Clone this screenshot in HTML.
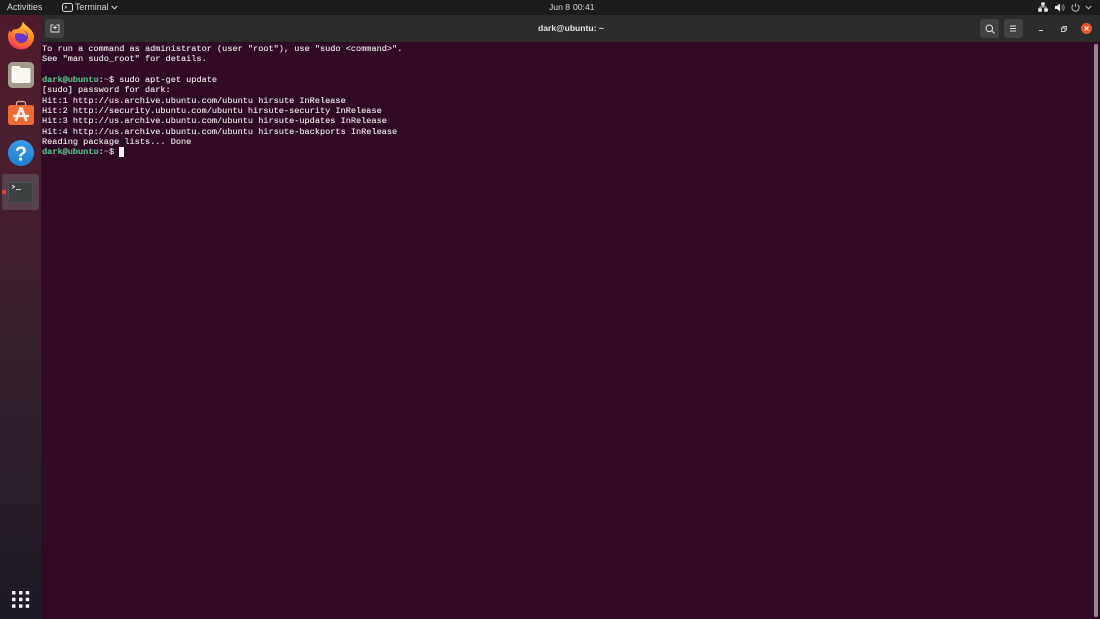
<!DOCTYPE html>
<html><head><meta charset="utf-8"><style>
*{margin:0;padding:0;box-sizing:border-box}
html,body{width:1100px;height:619px;overflow:hidden;background:#300a24}
body{position:relative;font-family:"Liberation Sans",sans-serif}
.a{position:absolute}
#top{left:0;top:0;width:1100px;height:15px;background:#1c1c1c;color:#d6d6d6;font-size:8.9px;line-height:15px}
#top span{filter:blur(.2px)}
#dock{left:0;top:15px;width:41px;height:604px;background:linear-gradient(180deg,#4f1b2c 0%,#491e2e 25%,#33202d 60%,#1d1a25 100%)}
#head{left:41px;top:15px;width:1059px;height:27px;background:#2c2c2c}
#term{left:41px;top:42px;width:1059px;height:577px;background:#300a24}
.l{position:absolute;left:42px;font:8.58px/10px "Liberation Mono",monospace;color:#ece8ea;white-space:pre;filter:blur(.25px);-webkit-text-stroke:.12px #ece8ea}
.g{color:#1fb568;font-weight:bold}.b{color:#5f7fb0}
.btn{position:absolute;width:19px;height:19px;background:#414141;border-radius:3px;top:19px}
.ic{filter:blur(.35px)}
</style></head><body>
<div class="a" id="top">
<span class="a" style="left:7px;top:0;letter-spacing:.03px">Activities</span>
<svg class="a" style="left:62px;top:3px" width="11" height="9" viewBox="0 0 11 9"><rect x=".5" y=".5" width="10" height="8" rx="2" fill="none" stroke="#d8d8d8"/><path d="M3 3l1.500 1.200L3 5.400" stroke="#d8d8d8" fill="none" stroke-width=".8"/></svg>
<span class="a" style="left:75px;top:0">Terminal</span>
<svg class="a" style="left:111px;top:5px" width="7" height="5" viewBox="0 0 7 5"><path d="M.7 1l2.800 2.800L6.300 1" stroke="#d8d8d8" fill="none"/></svg>
<span class="a" style="left:549px;top:0;font-size:8.6px">Jun 8</span>
<span class="a" style="left:573px;top:0;font-size:8.6px">00:41</span>
<svg class="a" style="left:1038px;top:2px" width="10" height="10" viewBox="0 0 10 10" fill="#ececec"><rect x="3.300" y="0.300" width="3.400" height="3.400"/><rect x="0.200" y="6.300" width="3.600" height="3.400"/><rect x="6.200" y="6.300" width="3.600" height="3.400"/><path d="M5 3v2M2 6.500V5h6v1.500" stroke="#ececec" fill="none" stroke-width=".8"/></svg>
<svg class="a" style="left:1055px;top:3px" width="10" height="9" viewBox="0 0 10 9"><path d="M0 3h2l3-2.500v8L2 6H0z" fill="#ececec"/><path d="M6.500 2.500a3 3 0 010 4M8 1.300a5 5 0 010 6.400" stroke="#999" fill="none" stroke-width=".9"/></svg>
<svg class="a" style="left:1071px;top:3px" width="9" height="9" viewBox="0 0 9 9"><path d="M4.500.5v3.500M2.300 1.800a3.600 3.600 0 104.400 0" stroke="#c4c4c4" fill="none" stroke-width=".9"/></svg>
<svg class="a" style="left:1085px;top:5px" width="7" height="5" viewBox="0 0 7 5"><path d="M.7 1l2.800 2.800L6.300 1" stroke="#c4c4c4" fill="none"/></svg>
</div>
<div class="a" id="dock"></div>
<div class="a" style="left:2px;top:174px;width:37px;height:36px;background:#55404b;border-radius:3px"></div>
<svg class="a ic" style="left:7px;top:21px" width="28" height="29" viewBox="0 0 28 29">
<defs><linearGradient id="f" x1=".7" y1="0" x2=".3" y2="1"><stop offset="0" stop-color="#ffd740"/><stop offset=".45" stop-color="#ff8a22"/><stop offset="1" stop-color="#f0305a"/></linearGradient></defs>
<path d="M14 28.500C6.800 28.500 1 22.700 1 15.500c0-2.500.6-4.600 1.700-6.300.3 1 .7 1.700 1.300 2.200C5 9 7 7.800 9.500 8.200 12 7.500 14 6 15 3.500c.3-1 .6-2 .8-3 1.200 2.600 3.800 4 6 6.200 3 2.800 5.200 5.600 5.200 8.800 0 7.200-5.800 13-13 13z" fill="url(#f)"/>
<circle cx="14.500" cy="15.500" r="6.500" fill="#6a35c4"/>
<path d="M6 11.500c3-3.500 9-3.800 12-.8 1.700 1.700 1.800 3.500 1.300 5-1-2.500-3.300-3.300-6.300-3.300-2.700 0-5.200-.2-7-.9z" fill="#ff9d2a"/>
<path d="M6.500 16.500c.8 4.500 4 7 8.200 6.500 3.200-.4 5.300-2.500 5.800-5 .2 5-3.400 8-7.200 7.700-4.300-.3-6.800-4.500-6.800-9.200z" fill="#ff6a2a"/>
</svg>
<svg class="a ic" style="left:8px;top:62px" width="26" height="26" viewBox="0 0 26 26"><rect width="26" height="26" rx="4.500" fill="#a39c8a"/><path d="M3.500 6a2 2 0 012-2h5.500l2 2h7.500a2 2 0 012 2v11a2 2 0 01-2 2H5.500a2 2 0 01-2-2z" fill="#faf8f2"/></svg>
<svg class="a ic" style="left:8px;top:100px" width="26" height="25" viewBox="0 0 26 25"><path d="M8.500 6V3.500a2 2 0 012-2h5a2 2 0 012 2V6" fill="none" stroke="#d9b5a0" stroke-width="1.200"/><rect y="5" width="26" height="20" rx="2.500" fill="#ee6c33"/><path d="M13 7.500L7.500 21M13 7.500L18.500 21" stroke="#fbeee6" stroke-width="2.800" fill="none"/><path d="M5 16h16" stroke="#fbeee6" stroke-width="2.300"/></svg>
<svg class="a ic" style="left:8px;top:140px" width="26" height="26" viewBox="0 0 26 26"><defs><linearGradient id="h" x1="0" y1="0" x2="0" y2="1"><stop offset="0" stop-color="#3a9ce8"/><stop offset="1" stop-color="#1f7fd0"/></linearGradient></defs><circle cx="13" cy="13" r="13" fill="url(#h)"/><text x="13" y="20.500" text-anchor="middle" font-family="Liberation Sans" font-weight="bold" font-size="20" fill="#fff">?</text></svg>
<div class="a" style="left:8px;top:182px;width:25px;height:21px;background:#3f4242;border-radius:2px;border:1px solid #4e4f50"></div>
<svg class="a" style="left:11px;top:184px" width="12" height="7" viewBox="0 0 12 7"><path d="M1 1l2.500 1.700L1 4.400" stroke="#eee" fill="none" stroke-width=".9"/><path d="M5 5.500h5" stroke="#ddd" stroke-width=".9"/></svg>
<div class="a ic" style="left:2px;top:190px;width:4px;height:4px;border-radius:50%;background:#e9442a"></div>
<svg class="a" style="left:12px;top:591px" width="18" height="17"><g fill="#f4f2f4"><rect x="0" y="0" width="3.500" height="3.500"/><rect x="7" y="0" width="3.500" height="3.500"/><rect x="13.700" y="0" width="3.500" height="3.500"/><rect x="0" y="6.700" width="3.500" height="3.500"/><rect x="7" y="6.700" width="3.500" height="3.500"/><rect x="13.700" y="6.700" width="3.500" height="3.500"/><rect x="0" y="13.300" width="3.500" height="3.500"/><rect x="7" y="13.300" width="3.500" height="3.500"/><rect x="13.700" y="13.300" width="3.500" height="3.500"/></g></svg>
<div class="a" id="head"></div>
<div class="btn" style="left:45px"></div>
<svg class="a" style="left:50px;top:24px" width="10" height="9" viewBox="0 0 10 9"><path d="M3.500 1H1v7h8V1H6.500M5 1.500v4M3 3.500h4" stroke="#ddd" fill="none" stroke-width=".9"/></svg>
<div class="a" style="left:441px;top:15px;width:260px;text-align:center;font-size:8.6px;font-weight:bold;line-height:27px;color:#e2e2e2;filter:blur(.2px)">dark@ubuntu: ~</div>
<div class="btn" style="left:980px"></div>
<svg class="a" style="left:985px;top:24px" width="10" height="10" viewBox="0 0 10 10"><circle cx="4.300" cy="4.300" r="3.300" fill="none" stroke="#ddd"/><path d="M6.800 6.800L9.500 9.500" stroke="#ddd" stroke-width="1.100"/></svg>
<div class="btn" style="left:1004px"></div>
<svg class="a" style="left:1009px;top:25px" width="8" height="7"><path d="M1 1h6M1 3.500h6M1 6h6" stroke="#ddd"/></svg>
<div class="a" style="left:1039px;top:30px;width:4px;height:1px;background:#ccc"></div>
<svg class="a" style="left:1061px;top:26px" width="6" height="6"><path d="M.5 2h3.500v3.500H.5zM2 2V.5h3.500V4H4" stroke="#ccc" fill="none" stroke-width=".9"/></svg>
<div class="a" style="left:1081px;top:23px;width:11px;height:11px;border-radius:50%;background:#e9542a"></div>
<svg class="a" style="left:1084px;top:26px" width="5" height="5"><path d="M.5.5l4 4M4.500.5l-4 4" stroke="#fff" stroke-width="1"/></svg>
<div class="a" id="term"></div>
<div class="a" style="left:1094px;top:44px;width:4px;height:573px;background:#94858e;border-radius:2px"></div>
<div class="l" style="top:43.500px">To run a command as administrator (user "root"), use "sudo &lt;command&gt;".</div>
<div class="l" style="top:54px">See "man sudo_root" for details.</div>
<div class="l" style="top:74.500px"><span class="g">dark@ubuntu</span>:<span class="b">~</span>$ sudo apt-get update</div>
<div class="l" style="top:85px">[sudo] password for dark:</div>
<div class="l" style="top:95.500px">Hit:1 http://us.archive.ubuntu.com/ubuntu hirsute InRelease</div>
<div class="l" style="top:106px">Hit:2 http://security.ubuntu.com/ubuntu hirsute-security InRelease</div>
<div class="l" style="top:116px">Hit:3 http://us.archive.ubuntu.com/ubuntu hirsute-updates InRelease</div>
<div class="l" style="top:126.500px">Hit:4 http://us.archive.ubuntu.com/ubuntu hirsute-backports InRelease</div>
<div class="l" style="top:137px">Reading package lists... Done</div>
<div class="l" style="top:147px"><span class="g">dark@ubuntu</span>:<span class="b">~</span>$</div>
<div class="a" style="left:119px;top:147px;width:5px;height:10px;background:#f2f0f1"></div>
</body></html>
